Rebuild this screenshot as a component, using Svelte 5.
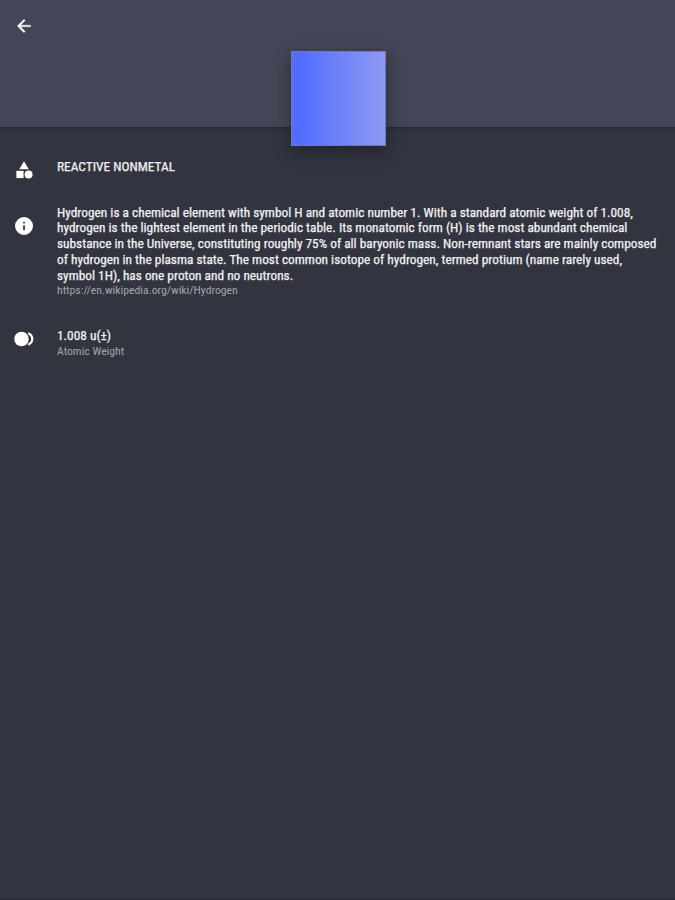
<script>
  const description = [
    'Hydrogen is a chemical element with symbol H and atomic number 1. With a standard atomic weight of 1.008,',
    'hydrogen is the lightest element in the periodic table. Its monatomic form (H) is the most abundant chemical',
    'substance in the Universe, constituting roughly 75% of all baryonic mass. Non-remnant stars are mainly composed',
    'of hydrogen in the plasma state. The most common isotope of hydrogen, termed protium (name rarely used,',
    'symbol 1H), has one proton and no neutrons.'
  ];
</script>

<main>
  <header>
    <svg class="back" viewBox="0 0 24 24" aria-label="Back"><path d="M20 11H7.83l5.59-5.59L12 4l-8 8 8 8 1.41-1.41L7.83 13H20z" /></svg>
    <div class="tile"></div>
  </header>

  <section class="row category">
    <svg viewBox="0 0 24 24"><path d="M12 1.5l-5.7 9.5h11.4z" /><circle cx="17.5" cy="17.3" r="4.8" /><path d="M2.8 13h8.7v8.7H2.8z" /></svg>
    <div class="content"><p class="primary">REACTIVE NONMETAL</p></div>
  </section>

  <section class="row info">
    <svg viewBox="0 0 24 24"><path d="M12 1.2a10.8 10.8 0 1 0 0 21.6 10.8 10.8 0 0 0 0-21.6zM13 17h-2v-6h2v6zm0-8h-2V7h2v2z" /></svg>
    <div class="content">
      {#each description as line}<p class="primary">{line}</p>{/each}
      <p class="secondary">https://en.wikipedia.org/wiki/Hydrogen</p>
    </div>
  </section>

  <section class="row weight">
    <svg viewBox="0 0 24 24"><circle cx="9" cy="12" r="8.7" /><path d="M17 4v2.6c2.2.82 3.6 3 3.6 5.4s-1.4 4.58-3.6 5.4V20c3.5-.89 6.3-4.01 6.3-8s-2.8-7.11-6.3-8z" /></svg>
    <div class="content">
      <p class="primary">1.008 u(±)</p>
      <p class="secondary">Atomic Weight</p>
    </div>
  </section>
</main>

<style>
  :global(body) { margin: 0; background: #32343f; }
  main {
    box-sizing: border-box;
    height: 900px;
    overflow: hidden;
    background: #32343f;
    border-bottom: 1px solid #2c2a34;
    color: #f2f2f4;
    font-family: Roboto, "Liberation Sans", sans-serif;
    font-stretch: 75%;
  }
  header {
    box-sizing: border-box;
    height: 127px;
    padding: 16px 0 0 14px;
    background: #444657;
    box-shadow: 0 1px 3px #22242d;
  }
  svg { display: block; fill: #fff; overflow: visible; }
  .back { width: 20px; height: 20px; stroke: #fff; stroke-width: .4; }
  .tile {
    box-sizing: border-box;
    position: relative;
    width: 95px;
    height: 95px;
    margin: 15px 0 0 277px;
    border: 1px solid #7078b8;
    background: linear-gradient(90deg, #536dfe 10%, #8c98f2 95%) border-box;
    box-shadow: 0 5px 14px rgba(20, 20, 24, .55);
  }
  .row { display: flex; align-items: flex-start; padding-left: 14px; }
  .row svg { width: 20px; height: 20px; flex: none; }
  .content { margin-left: 23px; }
  p { margin: 0; white-space: nowrap; }
  .primary { font-size: 13.35px; line-height: 15.8px; font-weight: 400; -webkit-text-stroke: .25px #f2f2f4; }
  .secondary { font-size: 11.7px; line-height: 14px; color: #a5a6ad; }
  .category { padding-top: 32px; }
  .category .content { margin: 0 0 1px 23px; }
  .category svg { width: 20px; height: 20px; margin-top: .5px; }
  .info { padding-top: 24.5px; }
  .info svg { margin-top: 11.5px; }
  .info .content { margin-top: .5px; }
  .info .secondary { margin-top: -.5px; }
  .weight { padding-top: 31px; }
  .weight svg { margin-top: 1.5px; }
</style>
